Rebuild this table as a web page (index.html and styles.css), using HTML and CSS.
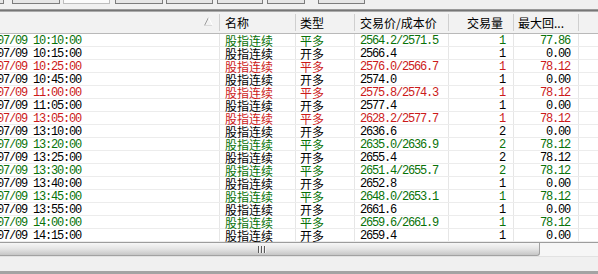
FILE: index.html
```html
<!DOCTYPE html>
<html lang="zh-CN">
<head>
<meta charset="utf-8">
<title>交易记录</title>
<link rel="stylesheet" href="styles.css">
</head>
<body>
<div class="tabs">
  <span class="tab t1"></span>
  <span class="tab t2"></span>
  <span class="tab t3 sel"></span>
  <span class="tab t4"></span>
  <span class="tab t5"></span>
  <span class="tab t6"></span>
  <span class="tab t7"></span>
  <span class="tab t8"></span>
</div>
<div class="band"></div>
<div class="grid">
  <div class="row head">
    <div class="hc c1"><svg class="sort" width="9" height="9" viewBox="0 0 9 9"><path d="M4.5 0.5 L0.5 8.5" stroke="#9c9c9c" fill="none"/><path d="M0.5 8.5 L8.5 8.5" stroke="#dadada" fill="none"/><path d="M4.5 0.5 L8.5 8.5" stroke="#ffffff" fill="none"/></svg></div>
    <div class="hc c2">名称</div>
    <div class="hc c3">类型</div>
    <div class="hc c4">交易价/成本价</div>
    <div class="hc c5">交易量</div>
    <div class="hc c6">最大回...</div>
    <div class="hc c7"></div>
  </div>

  <div class="row g"><div class="c c1 num"><span class="shift">07/09 10:10:00</span></div><div class="c c2">股指连续</div><div class="c c3">平多</div><div class="c c4 num">2564.2/2571.5</div><div class="c c5 num">1</div><div class="c c6 num">77.86</div><div class="c c7"></div></div>
  <div class="row"><div class="c c1 num"><span class="shift">07/09 10:15:00</span></div><div class="c c2">股指连续</div><div class="c c3">开多</div><div class="c c4 num">2566.4</div><div class="c c5 num">1</div><div class="c c6 num">0.00</div><div class="c c7"></div></div>
  <div class="row r"><div class="c c1 num"><span class="shift">07/09 10:25:00</span></div><div class="c c2">股指连续</div><div class="c c3">平多</div><div class="c c4 num">2576.0/2566.7</div><div class="c c5 num">1</div><div class="c c6 num">78.12</div><div class="c c7"></div></div>
  <div class="row"><div class="c c1 num"><span class="shift">07/09 10:45:00</span></div><div class="c c2">股指连续</div><div class="c c3">开多</div><div class="c c4 num">2574.0</div><div class="c c5 num">1</div><div class="c c6 num">0.00</div><div class="c c7"></div></div>
  <div class="row r"><div class="c c1 num"><span class="shift">07/09 11:00:00</span></div><div class="c c2">股指连续</div><div class="c c3">平多</div><div class="c c4 num">2575.8/2574.3</div><div class="c c5 num">1</div><div class="c c6 num">78.12</div><div class="c c7"></div></div>
  <div class="row"><div class="c c1 num"><span class="shift">07/09 11:05:00</span></div><div class="c c2">股指连续</div><div class="c c3">开多</div><div class="c c4 num">2577.4</div><div class="c c5 num">1</div><div class="c c6 num">0.00</div><div class="c c7"></div></div>
  <div class="row r"><div class="c c1 num"><span class="shift">07/09 13:05:00</span></div><div class="c c2">股指连续</div><div class="c c3">平多</div><div class="c c4 num">2628.2/2577.7</div><div class="c c5 num">1</div><div class="c c6 num">78.12</div><div class="c c7"></div></div>
  <div class="row"><div class="c c1 num"><span class="shift">07/09 13:10:00</span></div><div class="c c2">股指连续</div><div class="c c3">开多</div><div class="c c4 num">2636.6</div><div class="c c5 num">2</div><div class="c c6 num">0.00</div><div class="c c7"></div></div>
  <div class="row g"><div class="c c1 num"><span class="shift">07/09 13:20:00</span></div><div class="c c2">股指连续</div><div class="c c3">平多</div><div class="c c4 num">2635.0/2636.9</div><div class="c c5 num">2</div><div class="c c6 num">78.12</div><div class="c c7"></div></div>
  <div class="row"><div class="c c1 num"><span class="shift">07/09 13:25:00</span></div><div class="c c2">股指连续</div><div class="c c3">开多</div><div class="c c4 num">2655.4</div><div class="c c5 num">2</div><div class="c c6 num">78.12</div><div class="c c7"></div></div>
  <div class="row g"><div class="c c1 num"><span class="shift">07/09 13:30:00</span></div><div class="c c2">股指连续</div><div class="c c3">平多</div><div class="c c4 num">2651.4/2655.7</div><div class="c c5 num">2</div><div class="c c6 num">78.12</div><div class="c c7"></div></div>
  <div class="row"><div class="c c1 num"><span class="shift">07/09 13:40:00</span></div><div class="c c2">股指连续</div><div class="c c3">开多</div><div class="c c4 num">2652.8</div><div class="c c5 num">1</div><div class="c c6 num">0.00</div><div class="c c7"></div></div>
  <div class="row g"><div class="c c1 num"><span class="shift">07/09 13:45:00</span></div><div class="c c2">股指连续</div><div class="c c3">平多</div><div class="c c4 num">2648.0/2653.1</div><div class="c c5 num">1</div><div class="c c6 num">78.12</div><div class="c c7"></div></div>
  <div class="row"><div class="c c1 num"><span class="shift">07/09 13:55:00</span></div><div class="c c2">股指连续</div><div class="c c3">开多</div><div class="c c4 num">2661.6</div><div class="c c5 num">1</div><div class="c c6 num">0.00</div><div class="c c7"></div></div>
  <div class="row g"><div class="c c1 num"><span class="shift">07/09 14:00:00</span></div><div class="c c2">股指连续</div><div class="c c3">平多</div><div class="c c4 num">2659.6/2661.9</div><div class="c c5 num">1</div><div class="c c6 num">78.12</div><div class="c c7"></div></div>
  <div class="row"><div class="c c1 num"><span class="shift">07/09 14:15:00</span></div><div class="c c2">股指连续</div><div class="c c3">开多</div><div class="c c4 num">2659.4</div><div class="c c5 num">1</div><div class="c c6 num">0.00</div><div class="c c7"></div></div>
</div>
<div class="hscroll">
  <div class="thumb">
    <svg class="grip" width="9" height="7" viewBox="0 0 9 7"><path d="M1.5 0 V7 M4.5 0 V7 M7.5 0 V7" stroke="#5a5a5a" stroke-width="1" fill="none"/><path d="M2.5 0 V7 M5.5 0 V7 M8.5 0 V7" stroke="#f4f4f4" stroke-width="1" fill="none"/></svg>
  </div>
  <div class="track"></div>
</div>
<div class="status"></div>
<div class="bottom"></div>
</body>
</html>
```
FILE: styles.css
```css
* { box-sizing: border-box; }
html, body { margin: 0; padding: 0; }
body {
  width: 598px;
  height: 274px;
  overflow: hidden;
  background: #f0f0f0;
  font-family: "Noto Sans CJK SC", sans-serif;
  font-size: 12px;
  color: #000;
}

/* top tab strip: only bottom parts of the buttons are visible */
.tabs {
  height: 9px;
  display: flex;
  align-items: flex-start;
  background: #f0f0f0;
}
.tab {
  flex: none;
  height: 4px;
  background: #e6e6e6;
  border: 1px solid #7c7c7c;
  border-top: none;
}
.tab.sel { background: #fbfbfb; border-color: #bdbdbd; }
.t1 { margin-left: -40px; width: 44px; }
.t2 { margin-left: 8px; width: 48px; }
.t3 { margin-left: 3px; width: 47px; }
.t4 { margin-left: 5px; width: 48px; }
.t5 { margin-left: 3px; width: 47px; }
.t6 { margin-left: 4px; width: 46px; }
.t7 { margin-left: 4px; width: 38px; }
.t8 { margin-left: 13px; width: 47px; }

.band {
  height: 3px;
  background: linear-gradient(#999 0 1px, #767676 1px 2px, #ababab 2px 3px);
}

/* list grid */
.grid { background: #fff; }
.row {
  display: grid;
  grid-template-columns: 220px 76px 59px 94px 65px 65px 1fr;
  height: 13px;
  border-bottom: 1px solid #ececec;
}
.row.head {
  height: 22px;
  background: #f2f2f2;
  border-bottom: 1px solid #b9b9b9;
}
.hc {
  line-height: 21px;
  white-space: nowrap;
  background: linear-gradient(#cfcfcf, #cfcfcf) right center / 1px 17px no-repeat;
}
.hc.c1 { display: flex; align-items: center; justify-content: flex-end; padding-right: 7px; }
.hc.c2 { padding-left: 5px; }
.hc.c3 { padding-left: 4px; }
.hc.c4 { padding-left: 5px; }
.hc.c5 { text-align: right; padding-right: 11px; }
.hc.c6 { padding-left: 4px; }
.hc.c7 { background: none; }
.sort { display: block; margin-top: -2px; }

.c {
  height: 12px;
  line-height: 13px;
  white-space: nowrap;
  border-right: 1px solid #e6e6e6;
}
.c.c7 { border-right: none; }
.num {
  font-family: "Liberation Mono", monospace;
  font-size: 12px;
  line-height: 15px;
  letter-spacing: -1.2px;
}
.c.c2 { padding-left: 5px; }
.c.c3 { padding-left: 4px; }
.c.c4 { padding-left: 5px; }
.c.c5 { text-align: right; padding-right: 8px; }
.c.c6 { text-align: right; padding-right: 8px; }
.shift { display: inline-block; margin-left: -3px; }

.row.g { color: #087208; }
.row.r { color: #cc1a1a; }

/* horizontal scrollbar */
.hscroll {
  height: 14px;
  display: flex;
  border-top: 1px solid #9d9d9d;
  background: #f6f6f6;
}
.thumb {
  flex: none;
  width: 550px;
  margin-left: -10px;
  height: 13px;
  display: flex;
  align-items: center;
  justify-content: center;
  padding-right: 8px;
  background: linear-gradient(#f7f7f7, #e4e4e4 50%, #c6c6c6);
  border: 1px solid #a2a2a2;
  border-top: none;
  border-radius: 0 0 3px 0;
}
.grip { display: block; }
.track { flex: 1; }

.status {
  height: 15px;
  background: #f0f0f0;
  border-top: 1px solid #e2e2e2;
}
.bottom {
  height: 3px;
  background: #a3a3a3;
}
```
